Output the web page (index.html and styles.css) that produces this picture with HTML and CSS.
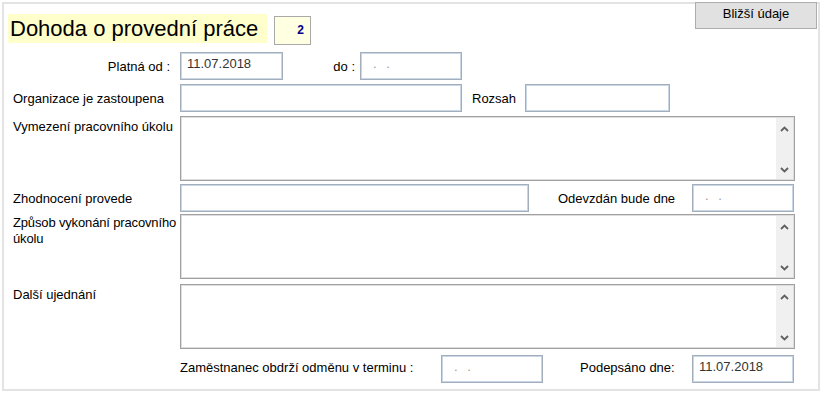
FILE: index.html
```html
<!DOCTYPE html>
<html lang="cs">
<head>
  <meta charset="UTF-8" />
  <title>Dohoda o provední práce</title>
  <link rel="stylesheet" href="styles.css">
</head>
<body>
  <div class="frame">
    <button class="detail-btn">Bližší údaje</button>

    <div class="title-row">
      <h1 class="title">Dohoda o provední práce</h1>
      <div class="number-box">2</div>
    </div>

    <div class="row row-1">
      <label class="lbl lbl-right">Platná od :</label>
      <div class="field w-103">11.07.2018</div>
      <label class="lbl lbl-do">do :</label>
      <div class="field w-102 empty">. .</div>
    </div>

    <div class="row row-2">
      <label class="lbl">Organizace je zastoupena</label>
      <div class="field w-282"></div>
      <label class="lbl lbl-rozsah">Rozsah</label>
      <div class="field w-145"></div>
    </div>

    <div class="row row-3 row-top">
      <label class="lbl lbl-top">Vymezení pracovního úkolu</label>
      <div class="memo">
        <div class="memo-body"></div>
        <div class="scroll">
          <svg width="9" height="6" viewBox="0 0 9 6"><path d="M1 5 L4.5 1.5 L8 5" fill="none" stroke="#606060" stroke-width="1.8"/></svg>
          <svg width="9" height="6" viewBox="0 0 9 6"><path d="M1 1 L4.5 4.5 L8 1" fill="none" stroke="#606060" stroke-width="1.8"/></svg>
        </div>
      </div>
    </div>

    <div class="row row-4">
      <label class="lbl">Zhodnocení provede</label>
      <div class="field w-349"></div>
      <label class="lbl lbl-odevzdan">Odevzdán bude dne</label>
      <div class="field w-102 empty">. .</div>
    </div>

    <div class="row row-5 row-top">
      <label class="lbl lbl-top lbl-wrap">Způsob vykonání pracovního úkolu</label>
      <div class="memo">
        <div class="memo-body"></div>
        <div class="scroll">
          <svg width="9" height="6" viewBox="0 0 9 6"><path d="M1 5 L4.5 1.5 L8 5" fill="none" stroke="#606060" stroke-width="1.8"/></svg>
          <svg width="9" height="6" viewBox="0 0 9 6"><path d="M1 1 L4.5 4.5 L8 1" fill="none" stroke="#606060" stroke-width="1.8"/></svg>
        </div>
      </div>
    </div>

    <div class="row row-6 row-top">
      <label class="lbl lbl-top">Další ujednání</label>
      <div class="memo">
        <div class="memo-body"></div>
        <div class="scroll">
          <svg width="9" height="6" viewBox="0 0 9 6"><path d="M1 5 L4.5 1.5 L8 5" fill="none" stroke="#606060" stroke-width="1.8"/></svg>
          <svg width="9" height="6" viewBox="0 0 9 6"><path d="M1 1 L4.5 4.5 L8 1" fill="none" stroke="#606060" stroke-width="1.8"/></svg>
        </div>
      </div>
    </div>

    <div class="row row-7">
      <span class="spacer"></span>
      <label class="lbl lbl-odmena">Zaměstnanec obdrží odměnu v terminu :</label>
      <div class="field w-102 empty">. .</div>
      <label class="lbl lbl-podepsano">Podepsáno dne:</label>
      <div class="field w-102">11.07.2018</div>
    </div>
  </div>
</body>
</html>
```

FILE: styles.css
```css
body {
  margin: 0;
  font-family: "Liberation Sans", Arial, sans-serif;
  font-size: 13px;
  color: #000;
  background: #fff;
}

.frame {
  position: relative;
  margin: 2px 0 0 2px;
  width: 814px;
  height: 385px;
  border: 2px solid #e3e3e3;
}

.detail-btn {
  position: absolute;
  top: -2px;
  left: 691px;
  width: 122px;
  height: 27px;
  background: #e1e1e1;
  border: 1px solid #adadad;
  font-family: "Liberation Sans", Arial, sans-serif;
  font-size: 13px;
  color: #000;
  padding: 0 0 4px;
}

.title-row {
  display: flex;
  align-items: flex-start;
  margin: 10px 0 0 4px;
  height: 38px;
}

.title {
  margin: 0;
  height: 29px;
  padding: 0 4px 0 2px;
  width: 253px;
  background: #ffffcc;
  font-size: 22px;
  font-weight: normal;
  line-height: 29px;
  white-space: nowrap;
}

.number-box {
  margin: 2px 0 0 7px;
  width: 29px;
  height: 27px;
  padding-right: 6px;
  border: 1px solid #a9a9a9;
  background: #ffffe1;
  color: #00008b;
  font-size: 12px;
  font-weight: bold;
  text-align: right;
  line-height: 26px;
}

.row {
  display: flex;
  align-items: center;
  height: 28px;
}

.row-top {
  align-items: flex-start;
  height: 65px;
}

.row-2 { margin-top: 4px; }
.row-3 { margin-top: 4px; }
.row-4 { margin-top: 3px; }
.row-5 { margin-top: 2px; }
.row-6 { margin-top: 5px; }
.row-7 { margin-top: 6px; }

.lbl {
  box-sizing: border-box;
  width: 176px;
  padding-left: 9px;
  flex-shrink: 0;
  white-space: nowrap;
}

.lbl-right {
  text-align: right;
  padding: 0 10px 0 0;
}

.lbl-top {
  padding-top: 3px;
}

.lbl-wrap {
  white-space: normal;
  line-height: 16px;
  padding-top: 1px;
  letter-spacing: -0.15px;
}

.lbl-do {
  width: 77px;
  padding: 0 5px 0 0;
  text-align: right;
}

.lbl-rozsah {
  width: 63px;
  padding-left: 10px;
}

.lbl-odevzdan {
  width: 163px;
  padding-left: 29px;
}

.spacer {
  width: 176px;
  flex-shrink: 0;
}

.lbl-odmena {
  width: 261px;
  padding-left: 0;
  padding-bottom: 3px;
}

.lbl-podepsano {
  width: 149px;
  padding-left: 37px;
  padding-bottom: 3px;
}

.field {
  box-sizing: border-box;
  height: 28px;
  padding: 0 0 5px 6px;
  border: 1px solid #a4adba;
  box-shadow: inset 0 0 0 1px #c8d6e8;
  color: #333;
  display: flex;
  align-items: center;
  flex-shrink: 0;
}

.field.empty {
  color: #999;
  padding-left: 12px;
  letter-spacing: 3px;
}

.w-102 { width: 102px; }
.w-103 { width: 103px; }
.w-145 { width: 145px; }
.w-282 { width: 282px; }
.w-349 { width: 349px; }

.memo {
  box-sizing: border-box;
  display: flex;
  width: 615px;
  height: 65px;
  border: 1px solid #a0a0a0;
  box-shadow: inset 0 0 0 1px #dedede;
  padding: 1px;
}

.memo-body {
  flex: 1;
}

.scroll {
  width: 17px;
  background: #f0f0f0;
  display: flex;
  flex-direction: column;
  justify-content: space-between;
  align-items: center;
  padding: 8px 0 6px;
}
```
